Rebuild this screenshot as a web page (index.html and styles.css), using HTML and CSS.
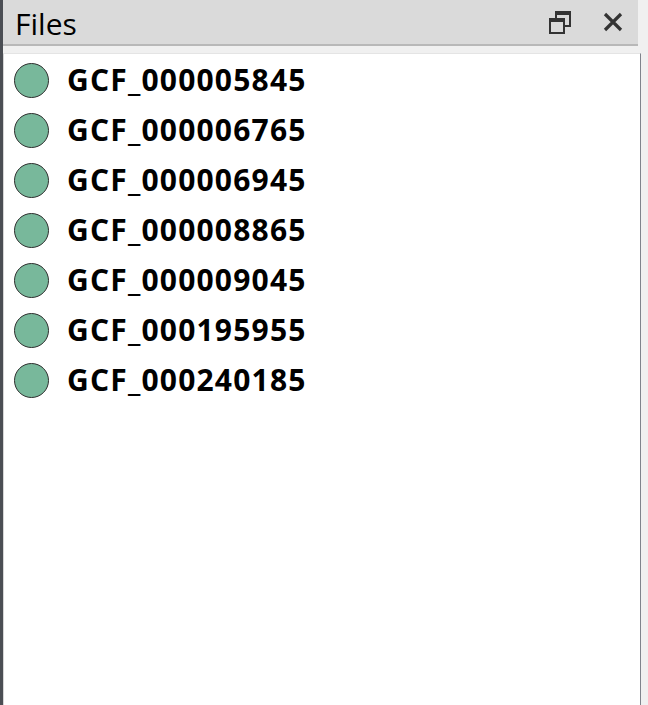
FILE: index.html
```html
<!DOCTYPE html>
<html>
<head>
<meta charset="utf-8">
<link rel="stylesheet" href="styles.css">
</head>
<body>
<div class="shell">
  <div class="strip"></div>
  <div class="dock">
    <div class="titlebar">
      <span class="title">Files</span>
      <div class="tools">
        <svg class="btn" width="22" height="24" viewBox="0 0 22 24">
          <rect x="7" y="2" width="14" height="14" fill="none" stroke="#333" stroke-width="2"/>
          <rect x="6" y="1" width="16" height="4" fill="#333"/>
          <rect x="1" y="9" width="14" height="14" fill="#dadada" stroke="#333" stroke-width="2"/>
          <rect x="0" y="8" width="16" height="4" fill="#333"/>
        </svg>
        <svg class="btn" width="20" height="20" viewBox="0 0 20 20">
          <path d="M2 2 L18 18 M18 2 L2 18" stroke="#333" stroke-width="3.2" fill="none"/>
        </svg>
      </div>
    </div>
    <div class="panel">
      <ul class="files">
        <li class="file"><span class="dot"></span><span class="name">GCF_000005845</span></li>
        <li class="file"><span class="dot"></span><span class="name">GCF_000006765</span></li>
        <li class="file"><span class="dot"></span><span class="name">GCF_000006945</span></li>
        <li class="file"><span class="dot"></span><span class="name">GCF_000008865</span></li>
        <li class="file"><span class="dot"></span><span class="name">GCF_000009045</span></li>
        <li class="file"><span class="dot"></span><span class="name">GCF_000195955</span></li>
        <li class="file"><span class="dot"></span><span class="name">GCF_000240185</span></li>
      </ul>
    </div>
  </div>
</div>
</body>
</html>
```

FILE: styles.css
```css
html, body {
  margin: 0;
  padding: 0;
  height: 100%;
  background: #f0f0f0;
  overflow: hidden;
}
.shell {
  display: flex;
  height: 705px;
}
.strip {
  width: 3px;
  flex: none;
  background: #4b4e54;
}
.dock {
  width: 638px;
  flex: none;
  display: flex;
  flex-direction: column;
}
.titlebar {
  height: 44px;
  margin-right: 3px;
  background: #dadada;
  border-bottom: 2px solid #b8b8b8;
  display: flex;
  align-items: center;
  justify-content: space-between;
  padding-left: 12px;
  padding-right: 15px;
}
.title {
  font-family: "Open Sans", "Noto Sans", sans-serif;
  font-size: 30px;
  color: #000;
  line-height: 1;
  margin-top: 4px;
}
.tools {
  display: flex;
  align-items: center;
  gap: 32px;
}
.btn {
  display: block;
}
.panel {
  margin-top: 7px;
  flex: 1;
  background: #fff;
  border-top: 1px solid #e4e4e4;
  border-left: 1px solid #d6d6d6;
  border-right: 1px solid #7f838c;
}
.files {
  list-style: none;
  margin: 0;
  padding: 1px 0 0 10px;
}
.file {
  height: 50px;
  display: flex;
  align-items: center;
  gap: 18px;
}
.dot {
  width: 33px;
  height: 33px;
  border-radius: 50%;
  background: #78b89b;
  border: 1px solid #2e2e2e;
  flex: none;
}
.name {
  font-family: "Open Sans", "Noto Sans", sans-serif;
  font-weight: 700;
  font-size: 30px;
  letter-spacing: 1.2px;
  color: #000;
  line-height: 1;
}
```
